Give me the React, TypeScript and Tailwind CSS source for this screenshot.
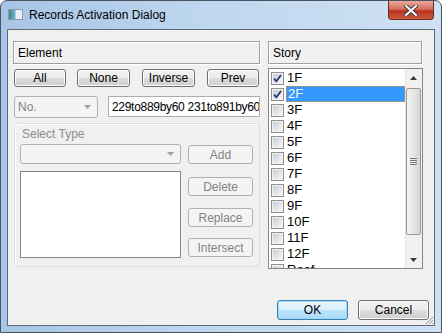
import * as React from "react";

const font = { fontFamily: '"Liberation Sans", Arial, sans-serif' };

function Btn({ label, w, h = 18, disabled = false, primary = false, className = "" }: { label: string; w: number; h?: number; disabled?: boolean; primary?: boolean; className?: string }) {
  let cls = "flex items-center justify-center rounded-[3px] border text-[12px] leading-none ";
  if (disabled) cls += "border-[#adb2b5] bg-[#f4f4f4] text-[#838383]";
  else if (primary) cls += "border-[#3c7fb1] bg-[linear-gradient(#eaf6fd_0%,#d9f0fc_50%,#bee6fd_50%,#a7d9f5_100%)] text-black shadow-[inset_0_0_0_1px_#9fdbf7]";
  else cls += "border-[#707070] bg-[linear-gradient(#f2f2f2_0%,#ebebeb_50%,#dddddd_50%,#cfcfcf_100%)] text-black shadow-[inset_0_0_0_1px_#fcfcfc]";
  return (
    <div className={cls + " " + className} style={{ width: w, height: h }}>
      {label}
    </div>
  );
}

function Arrow() {
  return (
    <svg width="7" height="4" viewBox="0 0 7 4">
      <path d="M0 0h7L3.5 4z" fill="#a0a0a0" />
    </svg>
  );
}

function Check({ on }: { on: boolean }) {
  return (
    <div className="flex h-[13px] w-[13px] shrink-0 items-center justify-center border border-[#8e8f8f] bg-white">
      <div className="flex h-[11px] w-[11px] items-center justify-center border border-[#f4f4f4] bg-[linear-gradient(135deg,#cbcfd5,#f6f6f6)]">
        {on && (
          <svg width="9" height="9" viewBox="0 0 9 9">
            <path d="M1 4.5l2.3 2.8L8 1" fill="none" stroke="#21387a" strokeWidth="1.8" />
          </svg>
        )}
      </div>
    </div>
  );
}

const stories = ["1F", "2F", "3F", "4F", "5F", "6F", "7F", "8F", "9F", "10F", "11F", "12F", "Roof"];

export default function App() {
  return (
    <div className="relative h-[333px] w-[442px] overflow-hidden rounded-t-[7px] border border-[#4a5460] bg-[linear-gradient(90deg,#a7c5e6,#bed6ef_45%,#cfe1f3)] text-black" style={font}>
      {/* title bar */}
      <div className="flex h-[28px] items-start">
        <div className="ml-[7px] mt-[8px] flex h-[11px] w-[15px] border border-[#8a9aa8] bg-[linear-gradient(90deg,#3e8a6e,#6fb1d9_45%,#e8eef4_55%,#e8eef4)]" />
        <span className="ml-[6px] mt-[7px] text-[12px] leading-[14px] text-black">Records Activation Dialog</span>
        <div className="ml-auto mr-[7px] flex h-[19px] w-[46px] items-center justify-center rounded-b-[4px] border border-t-0 border-[#6b2a22] bg-[linear-gradient(#e9a99c,#d4705d_45%,#b8321d_55%,#cc5a3c)]">
          <svg width="14" height="11" viewBox="0 0 14 11">
            <path d="M2 1l10 9M12 1L2 10" stroke="#3d3d3d" strokeWidth="4" strokeLinecap="square" />
            <path d="M2 1l10 9M12 1L2 10" stroke="#fff" strokeWidth="2" strokeLinecap="square" />
          </svg>
        </div>
      </div>

      {/* client area */}
      <div className="mx-[6px] h-[297px] border border-[#5d6b78] bg-[#f0f0f0]">
        <div className="flex pl-[5px] pt-[11px]">
          {/* left column */}
          <div className="flex w-[247px] flex-col">
            <div className="flex h-[23px] items-center border border-[#a0a0a0] pl-[4px] text-[12px] shadow-[inset_1px_1px_0_#fff,1px_1px_0_#fff]">Element</div>
            <div className="mt-[5px] flex pl-[1px]">
              <Btn label="All" w={52} />
              <Btn label="None" w={53} className="ml-[11px]" />
              <Btn label="Inverse" w={53} className="ml-[12px]" />
              <Btn label="Prev" w={52} className="ml-[12px]" />
            </div>
            <div className="mt-[9px] flex pl-[1px]">
              <div className="flex h-[22px] w-[84px] items-center justify-between rounded-[3px] border border-[#adb2b5] bg-[#f4f4f4] pl-[3px] pr-[6px] text-[12px] text-[#838383]">
                <span>No.</span>
                <Arrow />
              </div>
              <div className="ml-[10px] flex h-[21px] w-[152px] items-center overflow-hidden whitespace-nowrap border border-[#abadb3] bg-white pl-[3px] text-[12px] tracking-[-0.3px]">
                229to889by60 231to891by60
              </div>
            </div>
            <div className="ml-[1px] mt-[5px] flex h-[144px] w-[246px] flex-col rounded-[3px] border border-[#d5dfe5] pl-[5px] shadow-[inset_1px_1px_0_#fff]">
              <div className="ml-[2px] mt-[3px] text-[12px] leading-[14px] text-[#8d8d8d]">Select Type</div>
              <div className="mt-[3px] flex">
                <div className="flex h-[20px] w-[161px] items-center justify-end rounded-[3px] border border-[#adb2b5] bg-[#f4f4f4] pr-[6px]">
                  <Arrow />
                </div>
                <Btn label="Add" w={65} h={19} disabled className="ml-[7px] mt-[1px]" />
              </div>
              <div className="mt-[7px] flex">
                <div className="h-[87px] w-[161px] border border-[#828790] bg-white" />
                <div className="ml-[7px] flex flex-col pt-[6px]">
                  <Btn label="Delete" w={65} h={19} disabled />
                  <Btn label="Replace" w={65} h={19} disabled className="mt-[12px]" />
                  <Btn label="Intersect" w={65} h={19} disabled className="mt-[11px]" />
                </div>
              </div>
            </div>
          </div>

          {/* right column */}
          <div className="ml-[8px] flex w-[155px] flex-col">
            <div className="flex h-[23px] w-[154px] items-center border border-[#a0a0a0] pl-[4px] text-[12px] shadow-[inset_1px_1px_0_#fff,1px_1px_0_#fff]">Story</div>
            <div className="mt-[4px] flex h-[201px] overflow-hidden border border-[#828790] bg-white">
              <div className="flex-1 overflow-hidden pt-[1px]">
                {stories.map((s, i) => (
                  <div key={s} className="flex h-[16px] items-center pl-[2px]">
                    <Check on={i < 2} />
                    <div className={"ml-[2px] flex h-[16px] flex-1 items-center pl-[1px] text-[13px] " + (i === 1 ? "border border-dotted border-[#f08a24] bg-[#3399ff] text-white" : "")}>
                      {s}
                    </div>
                  </div>
                ))}
              </div>
              <div className="flex w-[17px] flex-col bg-[#f0f0f0] shadow-[inset_1px_0_0_#e3e3e3]">
                <div className="flex h-[17px] items-center justify-center">
                  <svg width="7" height="4" viewBox="0 0 7 4"><path d="M3.5 0L7 4H0z" fill="#3b3b3b" /></svg>
                </div>
                <div className="mx-[1px] mt-[2px] flex h-[147px] flex-col items-center justify-center rounded-[2px] border border-[#979797] bg-[linear-gradient(90deg,#f2f2f2,#e6e6e6_50%,#d6d6d6)]">
                  <div className="h-[1px] w-[7px] bg-[#7a7a7a]" />
                  <div className="mt-[1px] h-[1px] w-[7px] bg-[#7a7a7a]" />
                  <div className="mt-[1px] h-[1px] w-[7px] bg-[#7a7a7a]" />
                  <div className="mt-[1px] h-[1px] w-[7px] bg-[#7a7a7a]" />
                </div>
                <div className="mt-auto flex h-[17px] items-center justify-center">
                  <svg width="7" height="4" viewBox="0 0 7 4"><path d="M0 0h7L3.5 4z" fill="#3b3b3b" /></svg>
                </div>
              </div>
            </div>
          </div>
        </div>

        {/* bottom buttons */}
        <div className="relative mt-[31px] flex justify-end pr-[5px]">
          <Btn label="OK" w={71} h={20} primary />
          <Btn label="Cancel" w={71} h={20} className="ml-[10px]" />
          <svg className="absolute bottom-[-5px] right-[0px]" width="10" height="10" viewBox="0 0 10 10">
            <path d="M9 2L2 9M9 5L5 9M9 8L8 9" stroke="#9a9a9a" strokeWidth="1" />
          </svg>
        </div>
      </div>
    </div>
  );
}
